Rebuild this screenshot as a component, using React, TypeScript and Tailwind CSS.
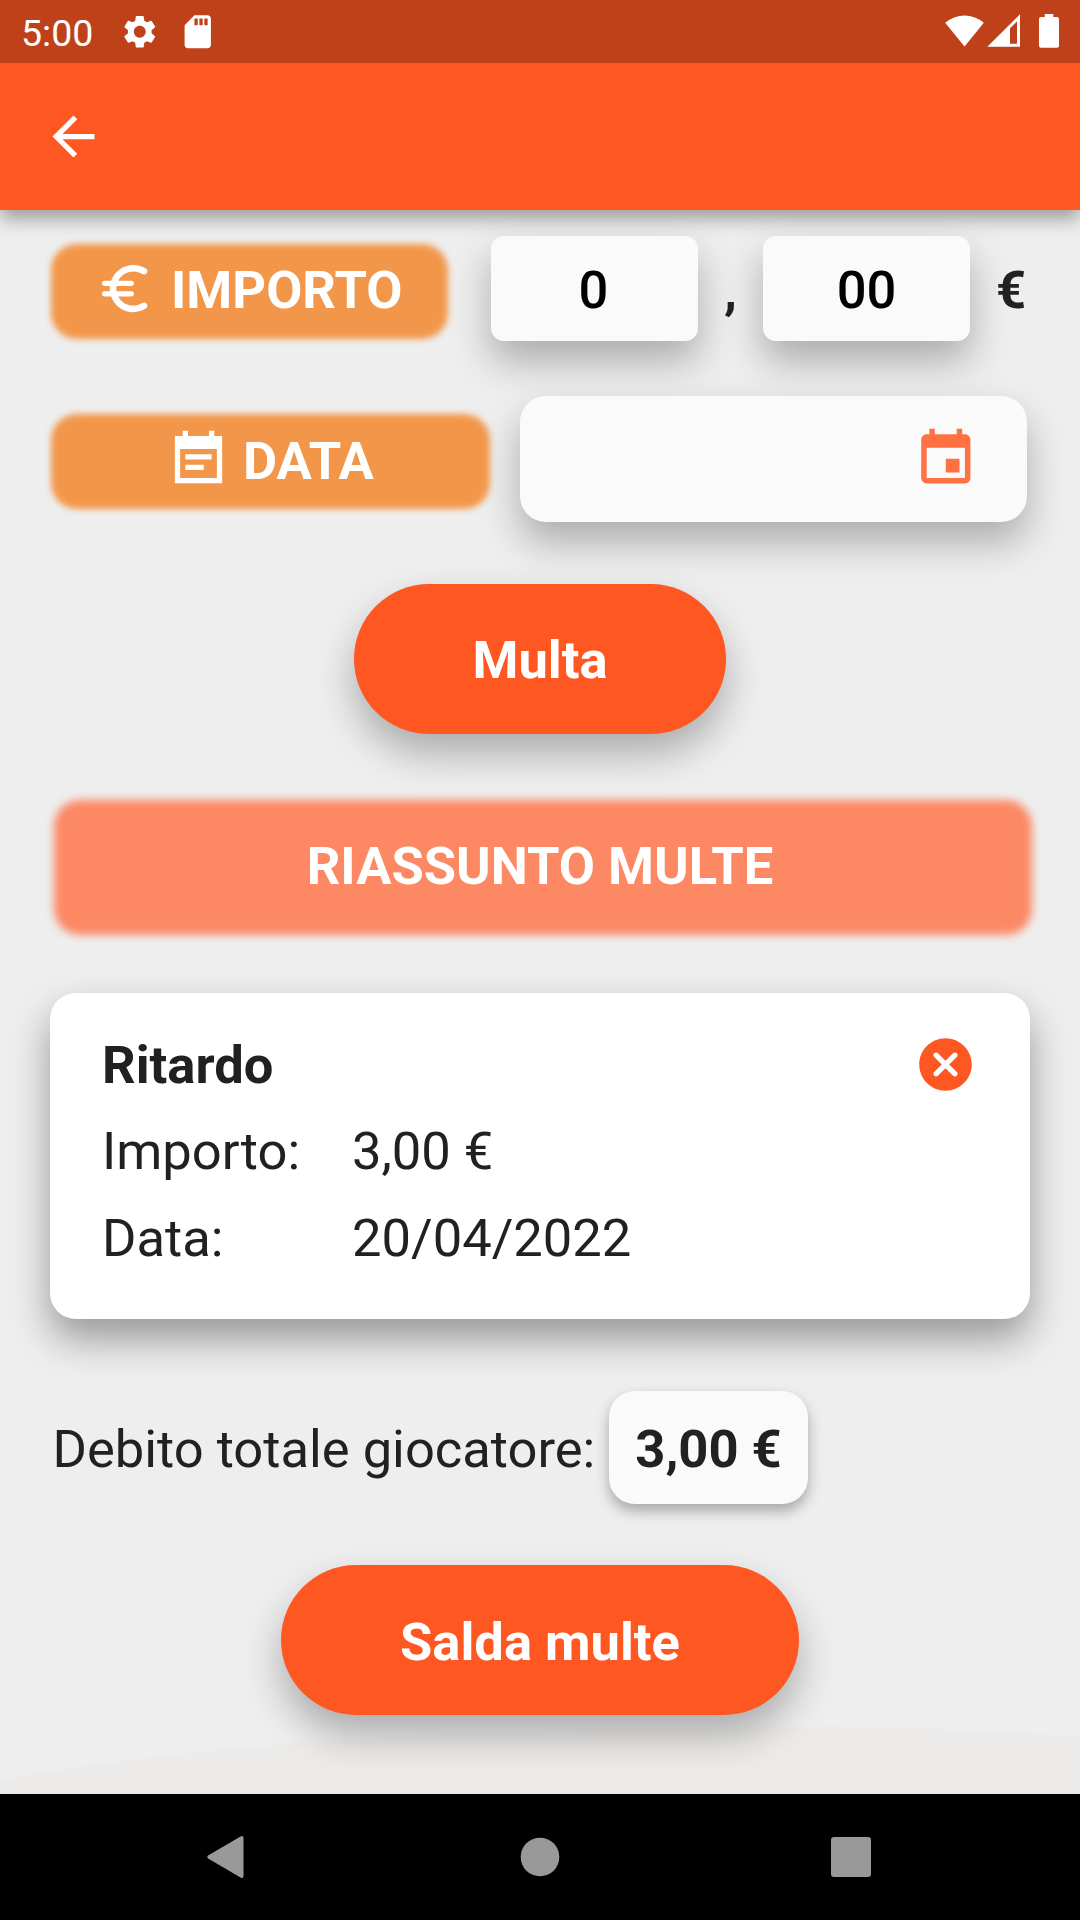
import type { ReactNode } from "react";
import { MdArrowBack, MdSettings, MdSdCard, MdEvent } from "react-icons/md";

const EURO_ROUNDED =
  "M15 18.5c-2.51 0-4.68-1.42-5.76-3.5h5.01c.55 0 1-.45 1-1s-.45-1-1-1H8.58c-.05-.33-.08-.66-.08-1s.03-.67.08-1h5.67c.55 0 1-.45 1-1s-.45-1-1-1H9.24C10.32 6.92 12.5 5.5 15 5.5c1.25 0 2.42.36 3.42.97.5.31 1.15.26 1.57-.16.58-.58.45-1.53-.25-1.96C18.36 3.5 16.73 3 15 3c-3.92 0-7.24 2.51-8.48 6H4c-.55 0-1 .45-1 1s.45 1 1 1h2.06c-.04.33-.06.66-.06 1s.02.67.06 1H4c-.55 0-1 .45-1 1s.45 1 1 1h2.52c1.24 3.49 4.56 6 8.48 6 1.74 0 3.36-.49 4.74-1.35.69-.43.82-1.39.24-1.97-.42-.42-1.07-.47-1.57-.15-.99.62-2.15.97-3.41.97z";
const EVENT_NOTE_SHARP =
  "M17 10H7v2h10v-2zm4-7h-3V1h-2v2H8V1H6v2H3v18h18V3zm-2 16H5V8h14v11zm-5-5H7v2h7v-2z";
const CANCEL_ROUNDED =
  "M12 2C6.47 2 2 6.47 2 12s4.47 10 10 10 10-4.47 10-10S17.53 2 12 2zm4.3 14.3c-.39.39-1.02.39-1.41 0L12 13.41 9.11 16.3c-.39.39-1.02.39-1.41 0-.39-.39-.39-1.02 0-1.41L10.59 12 7.7 9.11c-.39-.39-.39-1.02 0-1.41.39-.39 1.02-.39 1.41 0L12 10.59l2.89-2.89c.39-.39 1.02-.39 1.41 0 .39.39.39 1.02 0 1.41L13.41 12l2.89 2.89c.38.38.38 1.02 0 1.41z";

function Glyph({ d, className }: { d: string; className: string }) {
  return (
    <svg viewBox="0 0 24 24" fill="currentColor" className={className}>
      <path d={d} />
    </svg>
  );
}

function StatusBar() {
  return (
    <div className="flex h-[63px] items-start bg-[#bf411a] text-white">
      <span className="mt-[11px] ml-[21px] w-[99px] text-[37.5px] leading-[44px]">5:00</span>
      <MdSettings className="mt-3 size-[39.5px]" />
      <MdSdCard className="mt-3 ml-[18.5px] size-[39.5px]" />
      <svg viewBox="0 0 120 63" fill="currentColor" className="ml-auto h-[63px] w-[120px]">
        <path d="M5.200 22.800A29.500 29.500 0 0 1 43.800 22.800L24.500 46.600z" />
        <path d="M47.300 46.800L80 14.300V46.800zM70 28.200V43.800H77V21.600z" fillRule="evenodd" />
        <path d="M104.700 14h8.600v3h3.700a2 2 0 0 1 2 2v26.800a2 2 0 0 1-2 2h-16a2 2 0 0 1-2-2V19a2 2 0 0 1 2-2h3.700z" />
      </svg>
      <span className="w-[20px]" />
    </div>
  );
}

function Pill({ className, children }: { className: string; children: ReactNode }) {
  return (
    <div className={`relative isolate flex h-[95px] items-start text-white ${className}`}>
      <span className="absolute inset-0 -z-10 rounded-[26px] bg-[#f2974a] blur-[3px]" />
      {children}
    </div>
  );
}

const RAISED = "shadow-[0_20px_38px_rgba(0,0,0,0.28)]";

function AmountField({ value, className }: { value: string; className: string }) {
  return (
    <div
      className={`h-[105px] w-[207px] rounded-[13px] bg-[#fafafa] pt-[23px] text-center font-medium text-black ${RAISED} ${className}`}
    >
      {value}
    </div>
  );
}

function RoundButton({ label, className }: { label: string; className: string }) {
  return (
    <button
      className={`mx-auto block h-[150px] rounded-full bg-[#ff5722] text-center font-bold text-white ${RAISED} ${className}`}
    >
      {label}
    </button>
  );
}

export default function App() {
  return (
    <div className="flex h-[1920px] w-[1080px] flex-col overflow-hidden bg-[#eeeeee] font-[Roboto,sans-serif] text-[52.5px] leading-[62px] text-[#212121]">
      <header className="relative z-10 shadow-[0_8px_18px_rgba(0,0,0,0.36)]">
        <StatusBar />
        <div className="flex h-[147px] items-center bg-[#ff5722] pl-[42px] text-white">
          <MdArrowBack className="size-[63px]" />
        </div>
      </header>

      <main className="relative isolate h-[1584px] overflow-hidden">
        <svg viewBox="0 0 1080 70" className="absolute bottom-0 left-0 -z-10 h-[70px] w-full">
          <path d="M0 56C250 12 520 2.500 800 2.500C900 2.500 1000 7 1080 13V70H0z" fill="#ecebe9" />
        </svg>

        <section className="flex items-start pt-[26px] pl-[51px]">
          <Pill className="mt-[8px] w-[397px] pl-[43px]">
            <Glyph d={EURO_ROUNDED} className="mt-[13px] size-[63px]" />
            <span className="mt-[15px] ml-[14px] font-bold">IMPORTO</span>
          </Pill>
          <AmountField value="0" className="ml-[43px] pr-[2px]" />
          <span className="mt-[23px] ml-[26px] w-[39px] font-bold">,</span>
          <AmountField value="00" className="" />
          <span className="mt-[23px] ml-[26px] font-bold">€</span>
        </section>

        <section className="mt-[55px] flex items-start pl-[51px]">
          <Pill className="mt-[18px] w-[439px] pl-[116px]">
            <Glyph d={EVENT_NOTE_SHARP} className="mt-[14px] size-[63px]" />
            <span className="mt-[16px] ml-[13px] font-bold">DATA</span>
          </Pill>
          <div className={`ml-[30px] flex h-[126px] w-[507px] items-start rounded-[26px] bg-[#fafafa] ${RAISED}`}>
            <MdEvent className="mt-[30px] ml-[393px] size-[65.6px] text-[#ff7043]" />
          </div>
        </section>

        <RoundButton label="Multa" className="mt-[62px] w-[372px] pt-[2px]" />

        <section className="relative isolate mt-[66px] ml-[54px] h-[135px] w-[978px] pt-[35px] pr-[6px] text-center font-bold text-white">
          <span className="absolute inset-0 -z-10 rounded-[26px] bg-[#fc8864] blur-[4px]" />
          RIASSUNTO MULTE
        </section>

        <article className="mt-[58px] ml-[50px] h-[326px] w-[980px] rounded-[26px] bg-white pt-[41px] pl-[52px] shadow-[0_20px_38px_rgba(0,0,0,0.36)]">
          <div className="flex items-start">
            <h2 className="w-[812px] font-bold">Ritardo</h2>
            <Glyph d={CANCEL_ROUNDED} className="-mt-px size-[63px] text-[#ff5722]" />
          </div>
          <dl className="mt-[24px] grid grid-cols-[250px_auto] gap-y-[25px]">
            <dt>Importo:</dt>
            <dd>3,00 €</dd>
            <dt>Data:</dt>
            <dd>20/04/2022</dd>
          </dl>
        </article>

        <section className="mt-[72px] flex items-start pl-[52.5px]">
          <span className="mt-[27px] w-[556.5px]">Debito totale giocatore:</span>
          <span className="h-[113px] w-[199px] rounded-[26px] bg-[#fafafa] pt-[27px] text-center font-bold shadow-[0_7px_14px_rgba(0,0,0,0.3)]">
            3,00 €
          </span>
        </section>

        <RoundButton label="Salda multe" className="mt-[61px] w-[518px] pt-[4px]" />
      </main>

      <nav className="flex h-[126px] items-center bg-black text-[#999999]">
        <svg viewBox="0 0 1080 126" fill="currentColor" className="h-[126px] w-[1080px]">
          <path d="M208.500 61.200L240.500 42.500Q243.500 41 243.500 44V82Q243.500 85 240.500 83.500L208.500 64.800Q206 63 208.500 61.200z" />
          <circle cx="540" cy="63" r="19.300" />
          <rect x="831" y="43" width="40" height="40" rx="3" />
        </svg>
      </nav>
    </div>
  );
}
